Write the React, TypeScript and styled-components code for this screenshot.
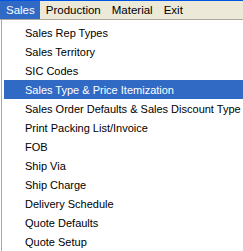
import styled, { createGlobalStyle } from "styled-components";

const GlobalStyle = createGlobalStyle`
  html, body {
    margin: 0;
    padding: 0;
    background: #ffffff;
  }
  body {
    font-family: "Liberation Sans", Arial, sans-serif;
    font-size: 11px;
  }
`;

const Window = styled.div`
  width: 243px;
  height: 251px;
  overflow: hidden;
  border-top: 1px solid #0054e3;
  box-sizing: border-box;
`;

const MenuBar = styled.div`
  display: flex;
  height: 18px;
  background: #ece9d8;
  border-bottom: 1px solid #aca899;
`;

const MenuTitle = styled.div<{ $active?: boolean }>`
  display: flex;
  align-items: center;
  padding: 0 5px 0 6px;
  height: 18px;
  color: ${(p) => (p.$active ? "#ffffff" : "#000000")};
  background: ${(p) => (p.$active ? "#316ac5" : "transparent")};
  font-family: "Liberation Sans", Arial, sans-serif;
  font-size: 11.5px;
`;

const Dropdown = styled.div`
  display: flex;
  flex-direction: column;
  margin-left: 1px;
  padding: 3px 0 0 2px;
  border-left: 1px solid #aca899;
  background: #ffffff;
  height: 240px;
`;

const Item = styled.div<{ $active?: boolean }>`
  display: flex;
  align-items: center;
  height: 19px;
  padding-left: 21px;
  white-space: nowrap;
  color: ${(p) => (p.$active ? "#ffffff" : "#000000")};
  background: ${(p) => (p.$active ? "#316ac5" : "transparent")};
  font-family: "Liberation Sans", Arial, sans-serif;
  font-size: 11px;
`;

const menus = ["Sales", "Production", "Material", "Exit"];

const items = [
  "Sales Rep Types",
  "Sales Territory",
  "SIC Codes",
  "Sales Type & Price Itemization",
  "Sales Order Defaults & Sales Discount Type",
  "Print Packing List/Invoice",
  "FOB",
  "Ship Via",
  "Ship Charge",
  "Delivery Schedule",
  "Quote Defaults",
  "Quote Setup",
];

const App = () => {
  return (
    <>
      <GlobalStyle />
      <Window>
        <MenuBar>
          {menus.map((m, i) => (
            <MenuTitle key={m} $active={i === 0}>
              {m}
            </MenuTitle>
          ))}
        </MenuBar>
        <Dropdown>
          {items.map((label, i) => (
            <Item key={label} $active={i === 3}>
              {label}
            </Item>
          ))}
        </Dropdown>
      </Window>
    </>
  );
};

export default App;
